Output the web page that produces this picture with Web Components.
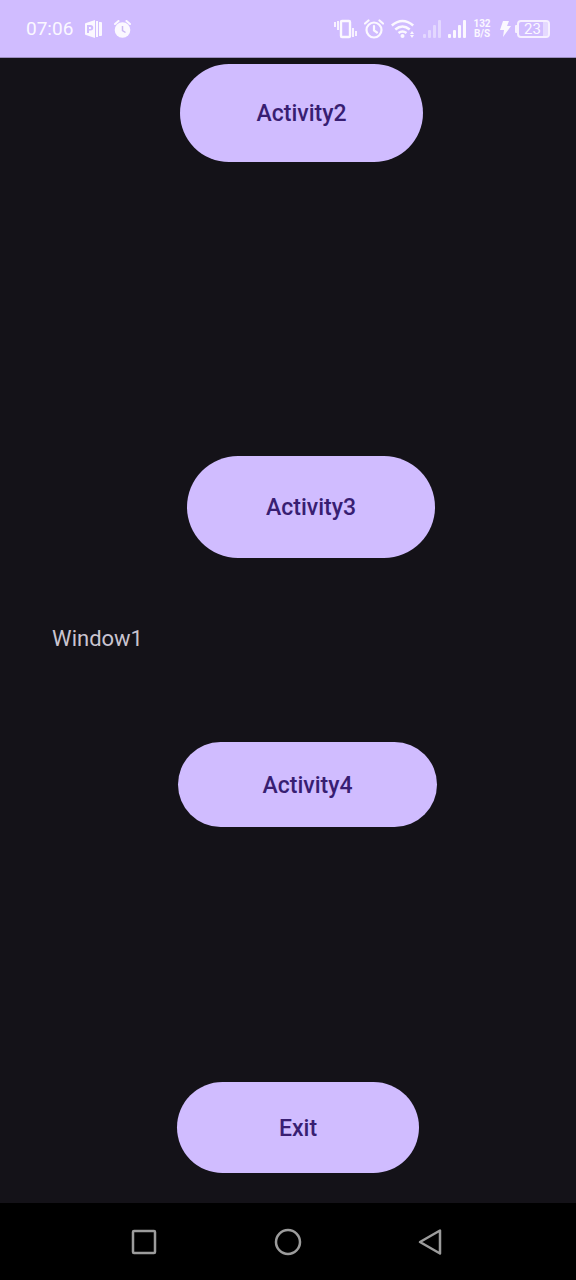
<!DOCTYPE html>
<html lang="en">
<head>
<meta charset="utf-8">
<meta name="viewport" content="width=device-width, initial-scale=1">
<title>Window1</title>
<style>
  html, body { margin: 0; }
  body { background: #000; font-family: Roboto, "Noto Sans", sans-serif; }
</style>
</head>
<body>
<app-screen></app-screen>
<script>
const define = (name, html) => {
  const template = document.createElement('template');
  template.innerHTML = html;
  customElements.define(name, class extends HTMLElement {
    constructor() {
      super();
      this.attachShadow({ mode: 'open' }).append(template.content.cloneNode(true));
    }
  });
};

define('status-bar', `
<style>
  :host { display: flex; justify-content: space-between; align-items: center; box-sizing: border-box;
    height: 58px; padding: 1px 26px 0; background: #d0bcff; border-bottom: 1px solid #9c8dbf; color: #fbf8ff; }
  .side { display: flex; align-items: center; gap: 12px; }
  .right { gap: 7px; }
  time { font-size: 19px; line-height: 24px; }
  svg { display: block; flex: none; }
  .rate { display: grid; justify-items: center; width: 18px; font-size: 10px; line-height: 10px; font-weight: 700; }
  .battery { display: flex; align-items: center; }
  .cell { display: flex; align-items: center; justify-content: center; box-sizing: border-box; width: 33px; height: 18px;
    border: 2px solid #f6f0ff; border-radius: 4px; font-size: 15px; line-height: 14px;
    background: linear-gradient(90deg, transparent 24px, #e5d9ff 24px) content-box; }
  .cell span { padding-right: 2px; }
  .cap { width: 2px; height: 8px; border-radius: 1px 0 0 1px; background: #f6f0ff; }
  .power { display: flex; align-items: center; gap: 3px; }
</style>
<div class="side">
  <time>07:06</time>
  <svg width="17" height="18" viewBox="0 0 17 18" fill="currentColor">
    <path fill-rule="evenodd" d="M1 3 10 0V18L1 15Q0 15 0 14V4Q0 3 1 3ZM2 5V13H4V10.500H5.500A2.750 2.750 0 0 0 5.500 5ZM4 7H5.200A1 1 0 0 1 5.200 9H4Z"/>
    <path d="M11 1h2v16h-2zM14 2h2q1 0 1 1v12q0 1-1 1h-2z"/>
  </svg>
  <svg width="17" height="18" viewBox="0 0 17 18" fill="none" stroke="currentColor">
    <circle cx="8.500" cy="10" r="7.800" fill="currentColor" stroke="none"/>
    <path d="M1 4 4.500 1M16 4 12.500 1" stroke-width="2" stroke-linecap="round"/>
    <path d="M8.500 6v4.500l3 2" stroke="#cbb8f3" stroke-width="1.500"/>
  </svg>
</div>
<div class="side right">
  <svg width="23" height="20" viewBox="0 0 23 20" fill="none" stroke="currentColor" stroke-width="2">
    <rect x="7" y="2" width="9" height="16" rx="1" stroke-width="2.400"/>
    <path d="M1 3v5M4 2v9M19 9v9M22 12v5" stroke-width="1.800"/>
  </svg>
  <svg width="20" height="20" viewBox="0 0 20 20" fill="none" stroke="currentColor" stroke-width="2.200" stroke-linecap="round">
    <circle cx="10" cy="11" r="7.500"/><path d="M1 4.500 4.500 1.500M19 4.500 15.500 1.500M10 7v4.500l3 2"/>
  </svg>
  <svg width="25" height="20" viewBox="0 0 25 20" fill="none" stroke="currentColor" stroke-width="2.600">
    <path d="M.8 6.500Q11.500-2.500 22.200 6.500M4.300 10.500Q11.500 4.500 18.700 10.500M7.500 14Q11.500 11 15.500 14"/>
    <circle cx="11.500" cy="17" r="2" fill="currentColor" stroke="none"/>
    <path fill="currentColor" stroke="none" d="m19 15 2-3 2 3zM19 16h4l-2 3z"/>
  </svg>
  <svg width="18" height="18" viewBox="0 0 18 18" fill="#e3d7ff">
    <rect y="14" width="3" height="4" rx="1"/><rect x="5" y="10" width="3" height="8" rx="1"/><rect x="10" y="5" width="3" height="13" rx="1"/><rect x="15" width="3" height="18" rx="1"/>
  </svg>
  <svg width="18" height="18" viewBox="0 0 18 18" fill="currentColor">
    <rect y="14" width="3" height="4" rx="1"/><rect x="5" y="10" width="3" height="8" rx="1"/><rect x="10" y="5" width="3" height="13" rx="1"/><rect x="15" width="3" height="18" rx="1"/>
  </svg>
  <div class="rate"><span>132</span><span>B/S</span></div>
  <div class="power">
    <svg width="14" height="18" viewBox="0 0 14 18" fill="currentColor"><path d="M5 1h6L9 6h4L5 17l1-7H2z"/></svg>
    <div class="battery"><div class="cap"></div><div class="cell"><span>23</span></div></div>
  </div>
</div>`);

// A row whose free width is shared between its two sides as --start : --end.
define('biased-row', `
<style>
  :host { display: grid; grid-template-columns: var(--start) auto var(--end); }
  slot { display: block; grid-column: 2; }
</style>
<slot></slot>`);

define('pill-button', `
<style>
  :host { display: block; }
  button { display: block; box-sizing: border-box; width: var(--width); height: var(--height); padding: 2px 0 0; border: 0;
    border-radius: 999px; background: #d0bcff; color: #381e72; font: 500 23px/28px Roboto, "Noto Sans", sans-serif; }
</style>
<button type="button"><slot></slot></button>`);

define('text-label', `
<style>:host { display: block; color: #cac4d0; font-size: 22px; line-height: 30px; }</style>
<slot></slot>`);

define('nav-bar', `
<style>
  :host { display: flex; justify-content: center; height: 77px; background: #000; }
  button { display: grid; place-items: center; width: 25%; padding: 0; border: 0; background: none; color: #9c9c9c; }
</style>
<button type="button" aria-label="Recent apps"><svg width="28" height="28" viewBox="0 0 28 28" fill="none" stroke="currentColor" stroke-width="2.500"><rect x="3" y="3" width="22" height="22" rx="1"/></svg></button>
<button type="button" aria-label="Home"><svg width="28" height="28" viewBox="0 0 28 28" fill="none" stroke="currentColor" stroke-width="2.500"><circle cx="14" cy="14" r="12"/></svg></button>
<button type="button" aria-label="Back"><svg width="28" height="28" viewBox="0 0 28 28" fill="none" stroke="currentColor" stroke-width="2.500" stroke-linejoin="round"><path d="M2 14 22 2.500V25.500Z"/></svg></button>`);

define('app-screen', `
<style>
  :host { display: flex; flex-direction: column; min-height: 100vh; background: #141218; }
  main { flex: 1; display: grid;
    grid-template-rows: 6fr auto 294fr auto 66fr auto 88fr auto 255fr auto 30fr; }
  .second { grid-row: 2; --start: 180fr; --end: 153fr; --width: 243px; --height: 98px; }
  .third { grid-row: 4; --start: 187fr; --end: 141fr; --width: 248px; --height: 102px; }
  .name { grid-row: 6; --start: 52fr; --end: 432fr; }
  .fourth { grid-row: 8; --start: 178fr; --end: 139fr; --width: 259px; --height: 85px; }
  .exit { grid-row: 10; --start: 177fr; --end: 157fr; --width: 242px; --height: 91px; }
</style>
<status-bar></status-bar>
<main>
  <biased-row class="second"><pill-button>Activity2</pill-button></biased-row>
  <biased-row class="third"><pill-button>Activity3</pill-button></biased-row>
  <biased-row class="name"><text-label>Window1</text-label></biased-row>
  <biased-row class="fourth"><pill-button>Activity4</pill-button></biased-row>
  <biased-row class="exit"><pill-button>Exit</pill-button></biased-row>
</main>
<nav-bar></nav-bar>`);
</script>
</body>
</html>
